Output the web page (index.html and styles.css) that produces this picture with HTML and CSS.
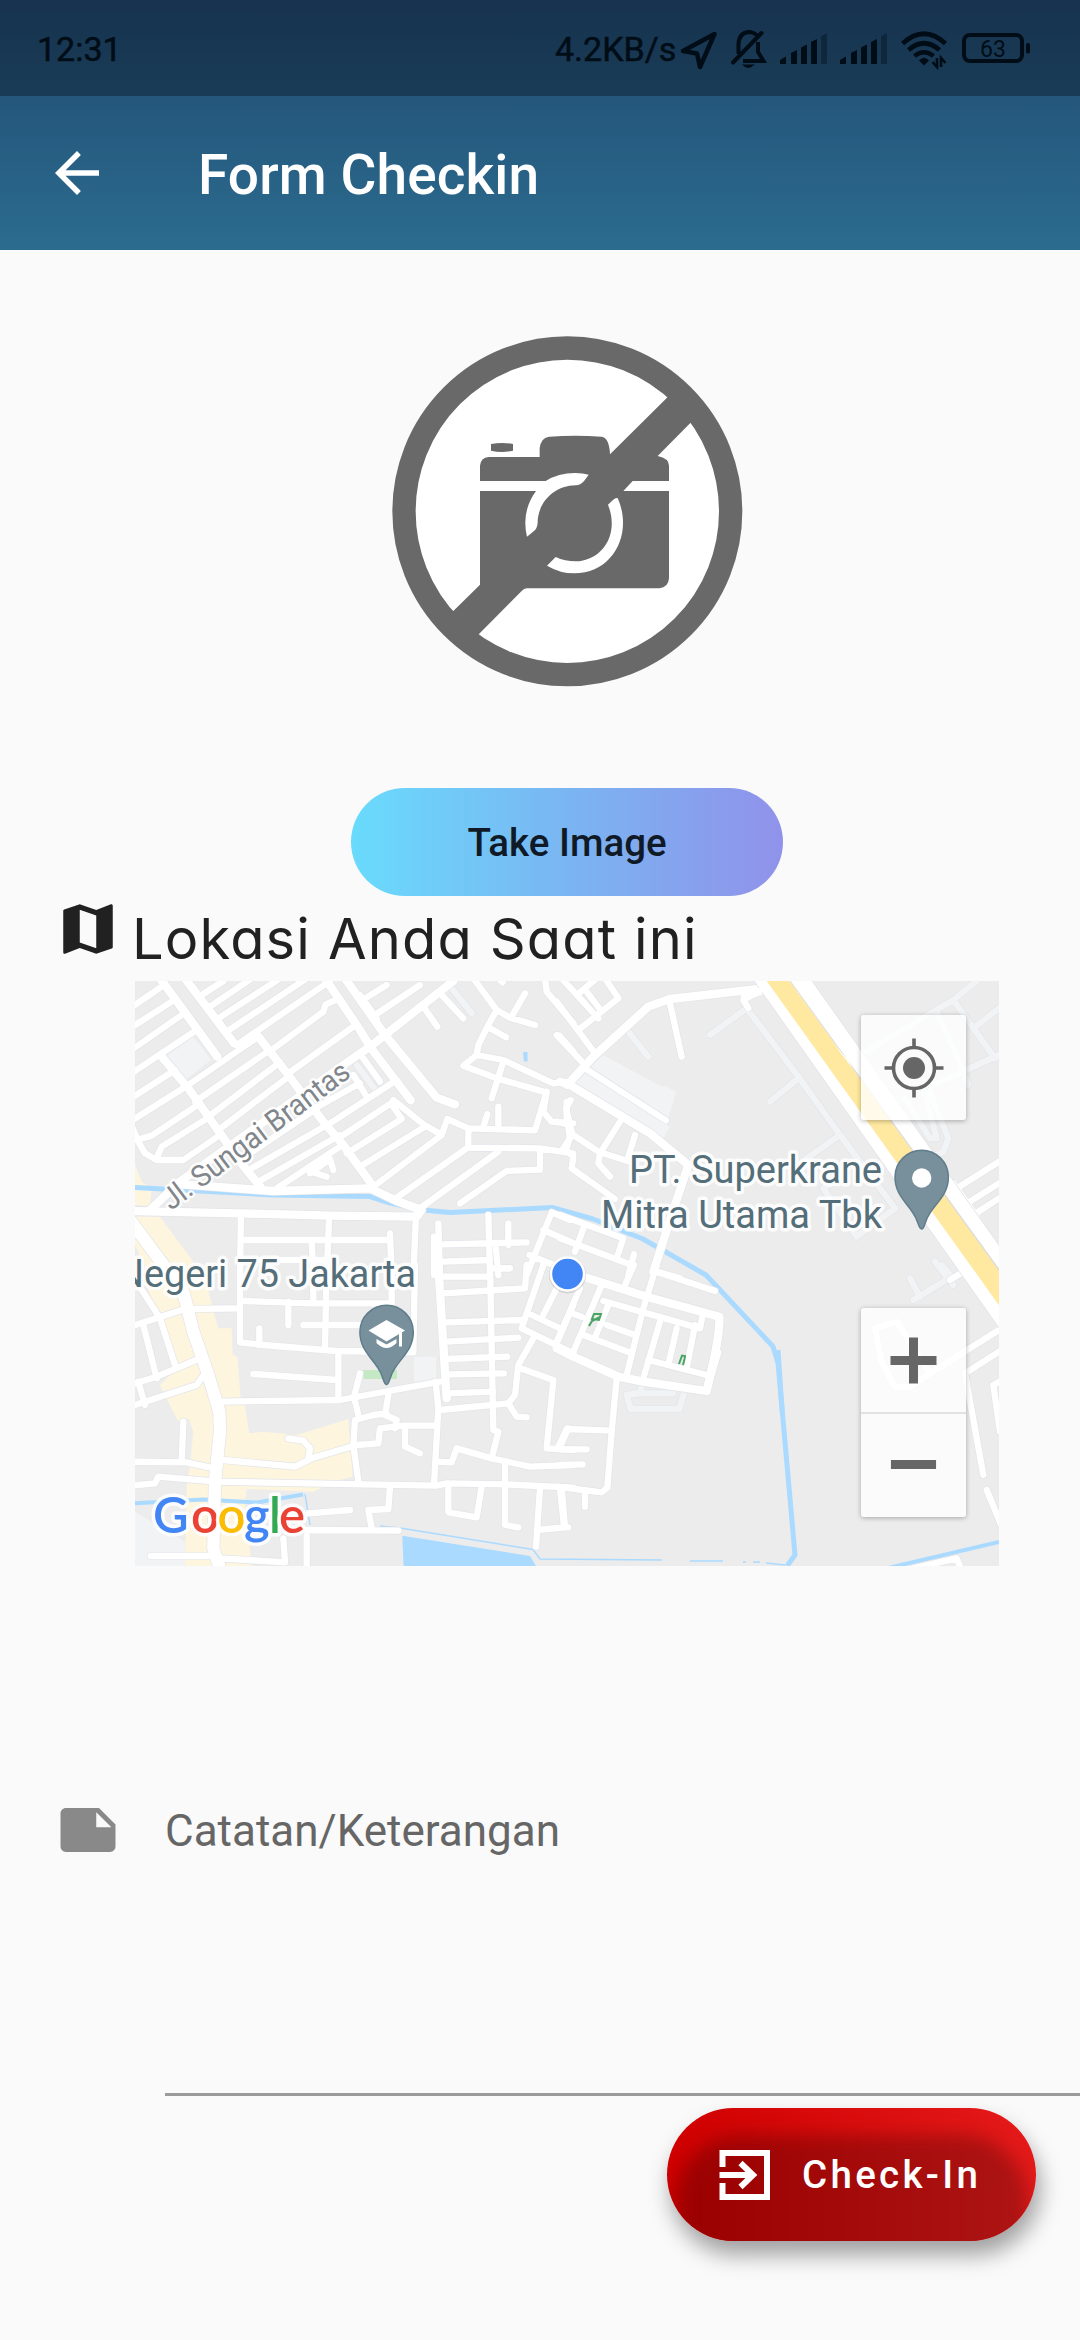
FILE: index.html
```html
<!DOCTYPE html>
<html lang="id">
<head>
<meta charset="utf-8">
<title>Form Checkin</title>
<link rel="stylesheet" href="styles.css">
</head>
<body>
<header class="top">
  <div class="status">
    <span class="clock">12:31</span>
    <span class="speed">4.2KB/s</span>
    <svg class="i-plane" width="38" height="40" viewBox="680 30 38 40"><path d="M683 51 L714.500 34 L700 67 L697 53.500 Z" fill="none" stroke="#010d16" stroke-width="4.500" stroke-linejoin="round"/></svg>
    <svg class="i-bell" width="36" height="40" viewBox="731 30 36 40"><g fill="none" stroke="#010d16" stroke-width="4"><path d="M738.500 54 V44 Q739 33 748.500 32 Q754 32 757.500 36"/><path d="M733 62.500 L761.500 33" stroke-linecap="round"/><path d="M758 42 V52 L763.500 61 H743"/></g><path d="M742 64.500 H754.500 Q748.500 71.500 742 64.500Z" fill="#010d16"/></svg>
    <svg class="i-sig" width="48" height="40" viewBox="0 30 48 40"><g fill="#010d16"><path d="M0 64 V60 L6 56.500 V64Z"/><path d="M11 64 V53 L17 50 V64Z"/><path d="M21 64 V47.500 L27 44.500 V64Z"/><path d="M31 64 V42 L37 39 V64Z"/><path d="M41 64 V36.500 L47 33 V64Z" opacity=".38"/></g></svg>
    <svg class="i-sig2" width="48" height="40" viewBox="0 30 48 40"><g fill="#010d16"><path d="M0 64 V60 L6 56.500 V64Z"/><path d="M11 64 V53 L17 50 V64Z"/><path d="M21 64 V47.500 L27 44.500 V64Z"/><path d="M31 64 V42 L37 39 V64Z"/><path d="M41 64 V36.500 L47 33 V64Z" opacity=".38"/></g></svg>
    <svg class="i-wifi" width="47" height="40" viewBox="900 30 47 40"><g fill="none" stroke="#010d16" stroke-width="4.600"><path d="M901.500 43.500 Q923 24 944.500 43.500"/><path d="M907.500 50 Q923 36.500 938.500 50"/><path d="M913.500 56 Q923 48.500 932.500 56"/></g><path d="M918 60.500 Q923 55 928 60.500 L923 65.500Z" fill="#010d16"/><path d="M936 58 V67 L931.500 62 M940 67 V58 L944.500 63" fill="none" stroke="#010d16" stroke-width="2.600"/></svg>
    <svg class="i-batt" width="70" height="40" viewBox="960 30 70 40"><rect x="963" y="35" width="58" height="26" rx="6" fill="none" stroke="#010d16" stroke-width="4"/><rect x="1025" y="43" width="4" height="10.500" rx="1.800" fill="#010d16"/><text x="992" y="57" class="pct">63</text></svg>
  </div>
  <div class="appbar">
    <svg width="66" height="66" viewBox="0 0 24 24"><path fill="#fff" d="M20 11H7.830l5.590-5.590L12 4l-8 8 8 8 1.410-1.410L7.830 13H20v-2z"/></svg>
    <h1>Form Checkin</h1>
  </div>
</header>

<main>
  <section class="photo">
    <svg width="400" height="380" viewBox="-9 0 1200 1140">
      <circle cx="592" cy="574" r="490" fill="#fff" stroke="#696969" stroke-width="70"/>
      <path fill="#696969" d="M363 372 Q396 366 429 372 V392 Q396 400 363 392Z"/>
      <path fill="#696969" d="M720 403 L891 233 L925 205 L990 280 L961 309 L863 408 Q897 415 897 437 V483 H788 L760 513 H897 V775 Q895 803 868 805 H470 Q462 806 455 813 L327 942 L290 960 L220 890 L250 873 L330 794 V437 Q332 413 356 411 H509 V385 Q513 352 538 350 Q615 345 695 350 Q718 354 720 403Z"/>
      <path fill="#fff" d="M330 483 H527 Q565 459 615 459 Q640 460 656 464 L644 481 Q633 496 617 496 C550 497 503 550 503 608 Q502 625 491 634 L471 650 Q453 575 498 513 H330Z"/>
      <path fill="#fff" d="M714 554 L728 541 Q736 533 743 534 C790 640 730 760 613 760 Q570 760 531 737 L557 711 Q585 724 617 724 C695 722 750 645 714 554Z"/>
    </svg>
    <button class="take">Take Image</button>
  </section>

  <section class="loc">
    <svg width="66" height="66" viewBox="0 0 24 24"><path fill="#212121" d="M20.500 3l-.16.030L15 5.100 9 3 3.360 4.900c-.21.070-.36.250-.36.480V20.500c0 .28.220.5.500.5l.16-.03L9 18.900l6 2.100 5.640-1.900c.21-.07.360-.25.360-.48V3.500c0-.28-.22-.5-.5-.5zM15 19l-6-2.110V5l6 2.110V19z"/></svg>
    <h2>Lokasi Anda Saat ini</h2>
  </section>

  <section class="map">
    <svg width="864" height="585" viewBox="135 981 864 585">
      <defs>
        <g id="lanes">
          <g transform="translate(130 975) scale(.33333)">
            <path d="M680 270 L740 350 M965 40 L1025 115"/>
          </g>
          <g transform="translate(560 975) scale(.33333)">
            <path d="M560 100 L715 305 L840 480 L1005 700 L890 785 L790 640 L840 610 M560 100 L450 180 M715 310 L630 380 M840 480 L740 550 M205 170 L265 245 M900 240 L1180 75 L1250 18 M1180 75 L1305 250 M1110 335 L1317 240 M1240 160 L1317 100 M1130 110 L1180 220 L1225 330 M1035 370 L1110 490 H1130 L1090 340 M1110 350 L1165 490 L1150 530 L1120 545 M1125 860 L1180 930"/>
          </g>
          <g transform="translate(560 1265) scale(.33333)">
            <path d="M245 360 L240 385 L200 390 L212 432 H358 L372 385 M220 385 H340 M1050 40 L1080 95 M1060 105 L1175 35 L1145 0"/>
          </g>
        </g>
        <g id="roads">
          <g transform="translate(130 975) scale(.33333)">
            <path class="l" d="M90 10 L262 245 M165 10 L312 205 M585 10 L690 165 L720 215 L830 360 L842 376 M645 10 L765 180 L920 368 L975 388 M970 18 L765 180 L720 215 L655 260 L150 620 L60 705 M385 185 L475 300 L580 440 L640 510 L730 635 M95 245 L175 340 L260 460 L330 560 L395 640"/>
            <path d="M0 100 L95 35 M0 160 L125 80 M0 228 L155 120 M0 298 L200 165 M0 372 L135 285 M0 440 L175 330 L385 185 M320 210 L480 100 L600 18 M215 60 L280 18 M240 95 L365 10 M265 130 L450 10 M290 170 L530 10 M425 225 L580 110 L587 88 L615 76 M475 295 L670 155 M195 380 L420 225 M235 425 L450 262 M265 465 L475 305 M20 495 L65 482 L210 385 M80 550 L95 515 L240 425 M0 440 L25 500 L45 535 L80 555 H160 L270 480 M345 545 L560 400 M365 580 L600 445 M385 620 L630 480 M440 640 L640 508 M555 400 L690 325 M690 80 L770 30 M735 120 L870 30 M740 130 L690 60 M600 445 L800 315 M625 490 L790 380 M650 535 L815 432 L790 395 M690 575 L885 455 M730 635 L935 480 M800 668 L1010 520 M870 700 L1105 530 M990 685 L1130 588 L1230 584 V525 M790 375 L880 448 L935 480 L952 432 L1015 460 L1215 466 L1250 350 M1015 460 V518 L1230 520 L1330 535 M545 590 L590 605 M540 595 L600 552 L610 585 M670 300 L710 365 M700 250 L750 320"/>
            <path class="l" d="M160 628 L430 648 L720 640 L800 678 L875 705 L860 725 L600 722 L330 715 L0 708"/>
            <path d="M1030 10 L1100 105 L1075 150 L1045 210 L1040 240 L1000 272 L1100 310 L1240 350 M1040 240 L1120 255 L1270 325 L1320 320 M1100 105 L1140 128 L1215 150 M1185 55 L1145 125 M1080 160 L1128 187 M1120 260 L1085 370 M1245 10 L1250 50 L1330 145 M1288 182 L1330 230 M1105 395 V455 M1072 418 L1060 455 M880 95 L922 155 M935 60 L1000 130 M1250 350 L1240 410 L1265 440 L1330 445 M1310 380 V430 L1320 490 L1300 520 M1100 5 L1118 22"/>
            <path d="M333 715 L330 900 M597 735 L590 900 M340 795 H780 M545 795 L550 900 M340 855 H590 M780 775 L785 900 M858 720 L850 900 M925 745 L930 900 M912 785 V900 M940 808 L1190 802 M940 860 L1080 855 M1075 720 L1080 900 M1135 745 V810 M1098 820 L1105 900 M1320 735 L1265 712 L1190 900 M1240 765 L1320 800 M1198 840 L1270 870 M1110 880 H1140"/>
            <path class="xl" d="M0 735 L115 890 L160 950"/>
          </g>
          <g transform="translate(560 975) scale(.33333)">
            <path class="l" d="M22 330 L100 245 L265 95 L330 72 L610 40 M0 320 L30 330 L270 475 L385 570 L345 690 L280 890"/>
            <path d="M330 85 L365 245 M605 45 L550 75 L565 100 M5 10 L115 130 M50 60 L110 10 M80 50 L125 110 M55 165 L175 70 L135 10 M-10 80 L105 235 M-10 180 L75 270 M75 280 L318 436 M32 375 L18 400 L35 470 L18 525 L40 545 L35 580 L165 672 M40 480 L115 530 L210 560 M180 440 L120 535 L115 565 L150 605 M225 480 L205 545 M-10 440 L30 450 M0 720 L190 790 L170 850 M0 790 L215 870 L205 900 M70 760 L45 830 M222 838 L205 900 M290 890 L360 910 M1190 640 L1317 560 M1210 692 L1317 625 M1240 720 L1317 670 M1180 625 L1250 725"/>
          </g>
          <g transform="translate(130 1265) scale(.33333)">
            <path class="xl" d="M140 30 L165 100 L190 200 L235 330 L268 440 L270 500 L255 650 L250 850 L270 910"/>
            <path d="M0 185 L165 132 L330 130 M20 50 L90 160 L135 300 M40 180 L80 340 M0 360 L80 335 L210 280 M0 425 L45 410 L200 360 L225 325 M25 350 L45 420 M160 470 L155 590 M0 590 L170 592 L260 612 M0 662 L75 655 L85 635 L260 650 L700 658 L920 662 L950 655 L1125 658 L1330 668 M280 585 L495 605 L545 580 L680 540 L745 535 L750 490 L820 482 H915 M475 520 L520 527 L540 550 L535 580 M270 410 L630 405 L930 350"/>
            <path d="M330 0 V232 L400 240 L620 258 L850 262 L855 0 M388 190 V240 M475 110 V180 M340 108 L545 115 H785 V0 M520 180 H690 M590 0 L585 250 M550 0 V115 M370 327 L620 345 M625 260 V405 M690 325 L672 395 L685 450 M770 445 L730 450 L675 465 L670 540 L685 650 M775 390 L765 450 L800 465 L795 490 M825 490 V545 L870 565 M917 350 L925 430 L912 660 M1135 415 L1160 455 L1190 457 M930 435 L1135 415 L1155 390 L1165 300 L1210 220 M1080 0 L1090 495 L1105 500 L1085 580"/>
            <path class="l" d="M925 0 L950 400"/>
            <path d="M940 35 H1075 M940 85 L1185 70 L1190 0 M950 172 L1175 165 M950 230 L1165 218 M950 282 L1132 275 M960 328 L1122 325 M950 385 L1090 380 M1090 10 H1140 M1240 0 L1175 190 L1330 265 M1205 150 L1290 190 M1280 70 L1240 150 M1330 120 L1280 235 M1170 310 L1270 345 L1250 550 L1330 555 M1315 490 L1290 545 M920 590 L965 592 L980 550 L1085 580 L1200 605 L1330 600 M1125 595 V780 L1165 787 M955 665 V742 L1040 757 L1055 665 M780 665 L775 732 L715 735 L725 790 M530 795 L805 797 M535 745 L660 735 M530 812 V910 M460 820 L465 892 L270 880 M62 873 H240 M1230 670 L1218 845 M1295 670 L1305 787 L1220 795"/>
          </g>
          <g transform="translate(560 1265) scale(.33333)">
            <path class="l" d="M80 38 L260 95 L478 155 Q480 200 460 290 L440 378 L250 350 L175 335 L40 275 L-10 250"/>
            <path d="M125 60 L40 260 M60 70 L-10 230 M290 0 L250 130 L200 330 M222 0 L195 60 M290 20 L465 78 M130 108 L420 190 L428 150 M70 210 L215 265 M140 180 L225 210 M145 120 L108 210 M35 145 L65 155 M300 170 L250 340 M265 285 L440 330 M350 190 L325 300 M405 180 L380 310 M475 262 L440 378 M170 340 L155 500 L142 668 L125 682 L-10 665 M155 497 L20 492 L-5 545 M0 553 H80 M0 600 L68 598 M75 680 V725 M0 670 L12 785 L25 787 M1317 195 L1110 325 L1050 366 H1005 L965 290 L945 190 L1010 170 L1110 325 M1330 252 L1215 325 L1270 630 M1330 345 L1300 360 L1320 500 M1280 675 L1330 795 M1060 910 L1190 880 L1202 910 M1170 45 L1210 20"/>
          </g>
        </g>
      </defs>
      <rect x="135" y="981" width="864" height="585" fill="#ececec"/>
      <g fill="#fdf5de">
        <path transform="translate(130 975) scale(.33333)" d="M15 570 L35 620 L65 640 L60 692 L15 690Z M15 725 H90 L190 860 L215 905 H60 L15 810Z"/>
        <path transform="translate(130 1265) scale(.33333)" d="M40 40 H225 L248 130 L265 190 H305 L308 270 L322 275 L332 400 L345 425 L358 505 L400 500 L500 510 L655 462 L668 635 L610 650 L550 680 L350 672 L345 715 L365 903 H165 L170 660 L180 600 L190 500 L175 460 L145 470 L90 360 L130 320 L105 200Z"/>
      </g>
      <g fill="#f1f3f5">
        <path transform="translate(130 975) scale(.33333)" d="M110 243 L190 185 L243 255 L170 312Z"/>
        <path transform="translate(560 975) scale(.33333)" d="M130 240 L305 335 L315 332 L348 350 L325 430 L90 275Z M75 295 L330 455 L310 490 L40 330Z"/>
        <path transform="translate(130 1265) scale(.33333)" d="M852 275 H918 V340 L852 350Z M15 740 L165 830 V903 H15Z"/>
      </g>
      <g fill="none" stroke="#aadaff" stroke-width="5" stroke-linejoin="round">
        <path d="M135 1187.500 L273 1195 L370 1196.500 L390 1203 L423 1210 L450 1212.500 L552 1207.500 L593 1219 L643 1239 L706 1275 L773 1346.500 L778 1363 L795 1555 L787 1566"/>
        <path d="M778 1350 L782 1410"/>
        <path d="M135 1503.300 L203 1499.500 L257 1502.500 L303 1494.500" stroke-width="4"/>
        <path d="M305 1494 L310 1525 M380 1526 L400 1528 L533 1549.500 L540 1559 L662 1560 M690 1561 H723 M743 1562 H746 M753 1562 H760 M766 1563 L785 1565" stroke-width="1.500"/>
        <path d="M888 1568 L999 1542" stroke-width="4"/>
      </g>
      <path fill="#aadaff" d="M402.300 1535.700 L530 1556 L536 1566 H403.500Z M523 1052 H527.500 V1061.500 H524Z"/>
      <path fill="#c5e8c5" d="M362 1370 H397 V1379 H364Z"/>
      <g class="road-edge light"><use href="#lanes"/></g>
      <g class="road-fill light"><use href="#lanes"/></g>
      <g class="road-edge"><use href="#roads"/></g>
      <g class="road-fill"><use href="#roads"/></g>
      <g transform="translate(560 975) scale(.33333)">
        <path fill="#fff" stroke="#e3e5e8" stroke-width="3" d="M578 12 H752 L1325 822 V1070Z"/>
        <path fill="#dcdcdc" d="M688 18 L692 18 L1320 885 V895Z"/>
        <path fill="#ffe9a0" d="M620 18 H688 L1320 892 V995Z"/>
        <path fill="#fff" d="M822 203 L842 230 L866 257 L878 280 L840 232Z"/>
        <path d="M545 70 L605 48" stroke="#fff" stroke-width="20"/>
      </g>
      <g fill="none" stroke="#4aa564" stroke-width="2">
        <path d="M589 1326 L592 1321 L600 1317 M594 1314 L601 1314 L599 1320 L592 1319Z"/>
        <path d="M679 1364 L682 1355.500 L685 1356 L684.500 1359 L683 1365"/>
      </g>

      <g class="place">
        <text class="street" transform="translate(171 1211) rotate(-36.700)" textLength="226" lengthAdjust="spacingAndGlyphs">Jl. Sungai Brantas</text>
        <text x="629" y="1183" textLength="253" lengthAdjust="spacingAndGlyphs">PT. Superkrane</text>
        <text x="601" y="1228" textLength="281" lengthAdjust="spacingAndGlyphs">Mitra Utama Tbk</text>
        <text x="117" y="1286.500" textLength="299" lengthAdjust="spacingAndGlyphs">Negeri 75 Jakarta</text>
      </g>
      <g fill="#78909c" stroke="#607d8b" stroke-width="1.500">
        <path d="M921.700 1229 C918 1229 919 1221 913 1213 C906 1202 895 1194 895 1177 A26.700 26.700 0 0 1 948.400 1177 C948.400 1194 937 1202 930 1213 C924 1221 925 1229 921.700 1229Z"/>
        <path d="M386.600 1384.500 C383 1384.500 384 1376 378 1368 C371 1357 359.900 1349 359.900 1332 A26.700 26.700 0 0 1 413.300 1332 C413.300 1349 402 1357 395 1368 C389 1376 390 1384.500 386.600 1384.500Z"/>
      </g>
      <circle cx="921.700" cy="1178" r="9.700" fill="#fff"/>
      <g fill="#fff"><path d="M368.500 1330.500 L386.500 1320 L405 1330.500 L386.500 1341.500Z"/><path d="M401.500 1331 H402 V1346.500 H399 V1333Z M376.500 1339 L386.500 1344.500 L396.500 1339 V1343 Q386.500 1353 376.500 1343Z"/></g>
      <circle cx="567.500" cy="1275" r="18.500" fill="#999" opacity=".3"/>
      <circle cx="567.500" cy="1274" r="16.500" fill="#4285f4" stroke="#fff" stroke-width="2.400"/>
      <text class="google" y="1533"><tspan x="153" fill="#4285f4">G</tspan><tspan x="191" fill="#ea4335">o</tspan><tspan x="217.500" fill="#fbbc05">o</tspan><tspan x="244" fill="#4285f4">g</tspan><tspan x="269" fill="#34a853">l</tspan><tspan x="279" fill="#ea4335">e</tspan></text>
    </svg>
    <div class="ctl locate"><svg width="66" height="66" viewBox="-33 -33 66 66"><g fill="none" stroke="#666" stroke-width="3.600"><circle r="20.500"/><path d="M0 -29.500V-20M0 29.500V20M-29.500 0H-20M29.500 0H20"/></g><circle r="11" fill="#666"/></svg></div>
    <div class="ctl zoom">
      <svg width="105" height="104" viewBox="0 0 105 104"><path d="M52.500 29.500V75.500M29.500 52.500H75.500" stroke="#666" stroke-width="9"/></svg>
      <svg width="105" height="105" viewBox="0 0 105 105"><path d="M29.500 51.500H75.500" stroke="#666" stroke-width="9"/></svg>
    </div>
  </section>

  <section class="note">
    <svg width="66" height="66" viewBox="0 0 24 24"><path fill="#898989" d="M22 10l-6-6H4c-1.100 0-2 .9-2 2v12.010c0 1.100.9 1.990 2 1.990l16-.01c1.100 0 2-.89 2-1.990v-8zm-7-4.500l5.500 5.500H15V5.500z"/></svg>
    <div class="field">Catatan/Keterangan</div>
  </section>

  <button class="fab">
    <svg width="52" height="50" viewBox="0 0 52 50"><g fill="none" stroke="#fff" stroke-width="6"><path d="M3.500 17V3H48V47H3.500V33"/><path d="M0.500 25H33"/><path d="M21.500 13L34 25L21.500 37"/></g></svg>
    <span>Check-In</span>
  </button>
</main>
</body>
</html>
```
FILE: styles.css
```css
* { box-sizing: border-box; }
body { margin: 0; width: 1080px; height: 2340px; overflow: hidden; background: #fafafa; font-family: Roboto, "Noto Sans", sans-serif; color: #212121; }
svg { display: block; flex: none; }
h1, h2 { margin: 0; font-weight: 400; white-space: nowrap; }
button { border: 0; padding: 0; font-family: inherit; }

.top { height: 250px; background: linear-gradient(#214971, #2b6c8e); }
.status { display: flex; height: 96px; padding-top: 30px; background: rgba(0, 0, 0, .3); color: #010d16; font-size: 34px; line-height: 38px; white-space: nowrap; -webkit-text-stroke: .5px #010d16; }
.clock { width: 518px; margin-left: 37px; }
.speed { width: 125px; }
.i-bell { margin-left: 13px; }
.i-sig { margin-left: 13px; }
.i-sig2 { margin-left: 12px; }
.i-wifi { margin-left: 13px; }
.i-batt { margin-left: 13px; }
.pct { font-size: 23px; font-weight: 400; text-anchor: middle; fill: #010d16; }
.appbar { display: flex; align-items: center; gap: 88px; height: 154px; padding-left: 44px; color: #fff; }
.appbar h1 { font-size: 55px; font-weight: 500; line-height: 60px; padding-top: 4px; letter-spacing: .1px; }

main { display: flex; flex-direction: column; }
.photo { display: flex; flex-direction: column; align-items: center; gap: 88px; width: 864px; margin-left: 135px; padding-top: 70px; }
.take { width: 432px; height: 108px; border-radius: 54px; background: linear-gradient(90deg, #69dbfc, #7ab5f2 50%, #9092ea); color: #0f1a26; font-size: 38.500px; font-weight: 500; }

.loc { display: flex; height: 85px; padding-left: 55px; gap: 11px; }
.loc h2 { font-family: Inter, Lato, sans-serif; font-size: 56px; font-feature-settings: "cv11"; line-height: 86px; letter-spacing: 1.150px; }

.map { position: relative; width: 864px; height: 585px; margin-left: 135px; overflow: hidden; }
.road-edge { --extra: 4px; stroke: #e2e4e8; }
.road-fill { --extra: 0px; stroke: #fff; }
.road-fill.light { stroke: #f1f3f5; }
#roads path, #lanes path { fill: none; stroke-linecap: round; stroke-linejoin: round; stroke-width: calc(19px + var(--extra)); }
#roads path.l { stroke-width: calc(25px + var(--extra)); }
#roads path.xl { stroke-width: calc(37px + var(--extra)); }
.place text { font-size: 39.500px; fill: #546e7a; stroke: rgba(255, 255, 255, .85); stroke-width: 7px; stroke-linejoin: round; paint-order: stroke; }
.place .street { font-size: 30px; fill: #80868b; stroke-width: 5px; }
.google { font-family: Lato, sans-serif; font-size: 49px; font-weight: 600; stroke: rgba(255, 255, 255, .85); stroke-width: 7px; stroke-linejoin: round; paint-order: stroke; }
.ctl { position: absolute; left: 726px; width: 105px; border-radius: 3px; background: rgba(255, 255, 255, .78); box-shadow: 0 1px 5px rgba(0, 0, 0, .3); }
.locate { top: 34px; height: 105px; display: grid; place-items: center; }
.zoom { top: 327px; height: 209px; }
.zoom svg + svg { border-top: 2px solid #e2e2e2; }

.note { display: flex; gap: 44px; height: 299px; margin-top: 231px; padding-left: 55px; }
.field { flex: 1; border-bottom: 3px solid #9b9b9b; color: #666; font-size: 44px; line-height: 68px; }

.fab { position: relative; display: flex; align-items: center; width: 369px; height: 133px; margin: 12px 44px 0 auto; padding-left: 52px; gap: 31px; border-radius: 67px; background: linear-gradient(90deg, #d00000, #e51a1a); box-shadow: 4px 14px 22px rgba(0, 0, 0, .36); color: #fff; font-size: 38.500px; font-weight: 500; letter-spacing: 3.300px; overflow: hidden; }
.fab::before { content: ""; position: absolute; inset: 27px 8px -50px 8px; border-radius: 67px; background: linear-gradient(90deg, #9b0000, #ad1414); filter: blur(9px); }
.fab svg, .fab span { position: relative; }
```
